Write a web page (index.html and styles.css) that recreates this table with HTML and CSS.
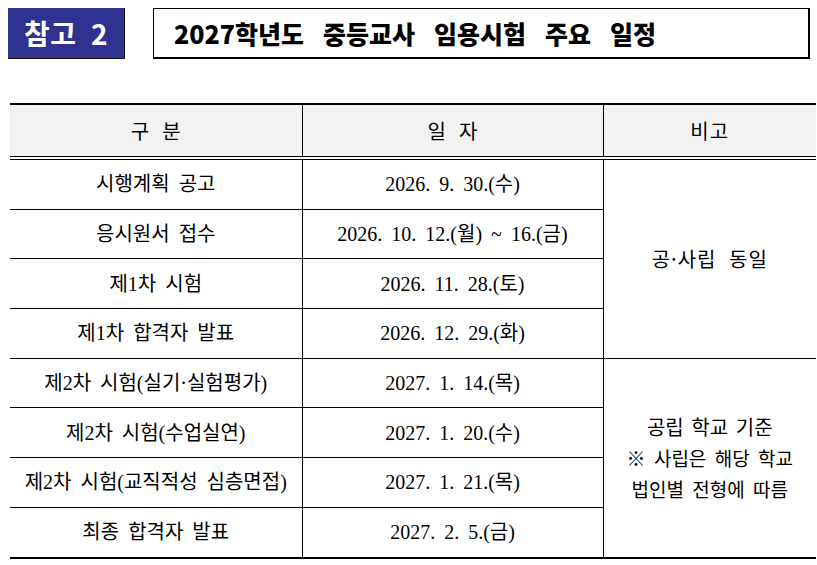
FILE: index.html
```html
<!DOCTYPE html>
<html lang="ko">
<head>
<meta charset="utf-8">
<link rel="stylesheet" href="styles.css">
</head>
<body>
<div class="page">
  <header class="head">
    <div class="badge">참고 2</div>
    <div class="title">2027학년도 중등교사 임용시험 주요 일정</div>
  </header>
  <table class="sched">
    <colgroup>
      <col class="c1"><col class="c2"><col class="c3">
    </colgroup>
    <thead>
      <tr><th class="serif">구 분</th><th class="serif">일 자</th><th class="sans">비고</th></tr>
    </thead>
    <tbody>
      <tr><td>시행계획 공고</td><td>2026. 9. 30.(수)</td><td class="note" rowspan="4">공·사립 동일</td></tr>
      <tr><td>응시원서 접수</td><td>2026. 10. 12.(월) ~ 16.(금)</td></tr>
      <tr><td>제1차 시험</td><td>2026. 11. 28.(토)</td></tr>
      <tr><td>제1차 합격자 발표</td><td>2026. 12. 29.(화)</td></tr>
      <tr><td>제2차 시험(실기·실험평가)</td><td>2027. 1. 14.(목)</td><td class="note multi" rowspan="4"><span class="l1">공립 학교 기준</span><br>※ 사립은 해당 학교<br>법인별 전형에 따름</td></tr>
      <tr><td>제2차 시험(수업실연)</td><td>2027. 1. 20.(수)</td></tr>
      <tr><td>제2차 시험(교직적성 심층면접)</td><td>2027. 1. 21.(목)</td></tr>
      <tr><td>최종 합격자 발표</td><td>2027. 2. 5.(금)</td></tr>
    </tbody>
  </table>
</div>
</body>
</html>
```
FILE: styles.css
```css
html, body {
  margin: 0;
  padding: 0;
  background: #fff;
}
.page {
  padding: 8px 0 0 8px;
  font-family: "Noto Sans CJK KR", sans-serif;
  color: #000;
}
.head {
  display: flex;
  align-items: stretch;
  height: 51px;
  gap: 28px;
}
.badge {
  width: 116px;
  background: #2f3290;
  border-right: 1px solid #111;
  border-bottom: 1px solid #111;
  color: #fff;
  font-weight: 700;
  font-size: 28px;
  display: flex;
  align-items: center;
  justify-content: center;
  letter-spacing: 0.5px;
  word-spacing: 6px;
  line-height: 1;
}
.title {
  width: 657px;
  box-sizing: border-box;
  border: 1px solid #000;
  border-right-width: 2px;
  border-bottom-width: 2px;
  font-weight: 900;
  font-size: 25px;
  display: flex;
  align-items: center;
  padding-left: 20px;
  word-spacing: 12px;
  line-height: 1;
}
.sched {
  margin: 44px 0 0 2px;
  width: 806px;
  border-collapse: collapse;
  table-layout: fixed;
  border-top: 2px solid #000;
  border-bottom: 2px solid #000;
}
.c1 { width: 292px; }
.c2 { width: 301px; }
.c3 { width: 213px; }
th {
  background: #f2f2f2;
  height: 51px;
  padding: 0;
  font-weight: 400;
  font-size: 20px;
  border-bottom: 4px double #000;
  border-left: 1px solid #000;
}
th:first-child, td:first-child { border-left: none; }
th.serif {
  font-family: "Liberation Serif", "Noto Sans CJK KR", serif;
  word-spacing: 8px;
}
th.sans {
  font-family: "Noto Sans CJK KR", sans-serif;
  font-size: 20px;
  letter-spacing: 1px;
}
td {
  height: 48.7px;
  padding: 0;
  text-align: center;
  font-family: "Liberation Serif", "Noto Sans CJK KR", serif;
  font-size: 20px;
  word-spacing: 4px;
  border-top: 1px solid #000;
  border-left: 1px solid #000;
  line-height: 1.2;
  white-space: nowrap;
}
td.note {
  font-family: "Noto Sans CJK KR", sans-serif;
  font-size: 20px;
  letter-spacing: 1px;
  word-spacing: 6px;
}
td.multi {
  line-height: 31px;
  font-size: 19px;
  letter-spacing: 0;
  word-spacing: 3px;
}
td.multi .l1 {
  font-size: 20px;
  word-spacing: 2px;
}
```
